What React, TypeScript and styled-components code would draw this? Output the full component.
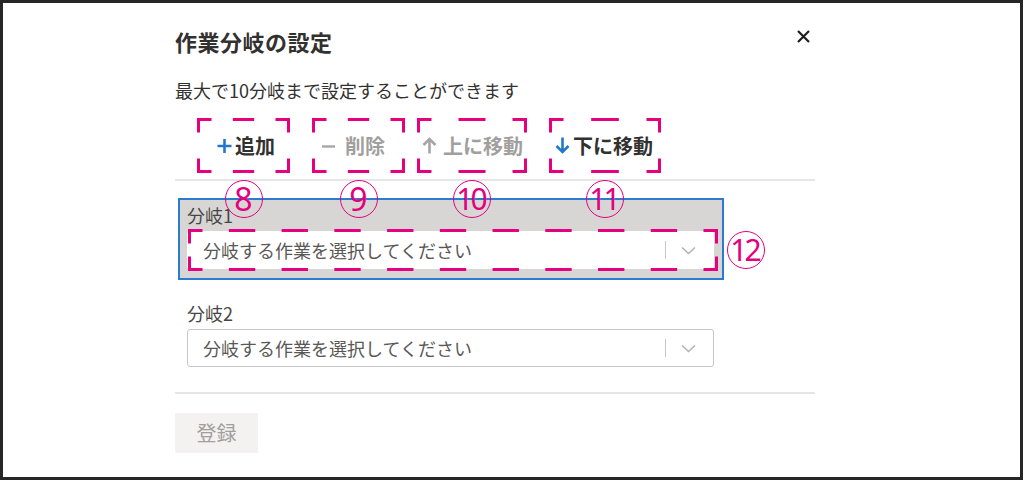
import React from "react";
import styled, { createGlobalStyle } from "styled-components";

const MAGENTA = "#e4007f";

const GlobalStyle = createGlobalStyle`
  html, body { margin: 0; padding: 0; background: #ffffff; }
  body { font-family: "Noto Sans CJK JP", "Noto Sans", sans-serif; }
  *, *::before, *::after { box-sizing: border-box; }
`;

const Frame = styled.div`
  width: 1023px;
  height: 480px;
  border: 3px solid #262626;
  background: #ffffff;
  overflow: hidden;
`;

const Dialog = styled.div`
  width: 640px;
  margin-left: 172px;
  padding-top: 23px;
  display: flex;
  flex-direction: column;
`;

const TitleRow = styled.div`
  display: flex;
  justify-content: space-between;
  align-items: flex-start;
`;

const Title = styled.h1`
  margin: 0;
  font-size: 22px;
  line-height: 30px;
  font-weight: 700;
  color: #323130;
  letter-spacing: 0.5px;
`;

const CloseButton = styled.button`
  border: 0;
  background: none;
  padding: 0;
  margin: 4px 5px 0 0;
  width: 13px;
  height: 13px;
  display: flex;
  cursor: pointer;
`;

const Subtitle = styled.p`
  margin: 21px 0 0;
  font-size: 18px;
  line-height: 26px;
  color: #323130;
`;

const CommandBar = styled.div`
  display: flex;
  margin-top: 15px;
  height: 55px;
`;

const CommandButton = styled.button<{ $w: number; $pl: number; $ml: number; $gap: number; $disabled?: boolean }>`
  position: relative;
  width: ${(p) => p.$w}px;
  height: 55px;
  margin-left: ${(p) => p.$ml}px;
  padding: 0 0 0 ${(p) => p.$pl}px;
  display: flex;
  align-items: center;
  gap: ${(p) => p.$gap}px;
  border: 0;
  background: none;
  font-family: inherit;
  font-size: 20px;
  line-height: 26px;
  font-weight: 700;
  color: ${(p) => (p.$disabled ? "#a19f9d" : "#323130")};
  cursor: ${(p) => (p.$disabled ? "default" : "pointer")};
  white-space: nowrap;
`;

const Separator = styled.hr<{ $mt: number }>`
  margin: ${(p) => p.$mt}px 0 0;
  border: 0;
  height: 2px;
  background: #e6e6e6;
`;

const BranchList = styled.div`
  margin-top: 17px;
  display: flex;
  flex-direction: column;
  gap: 16px;
`;

const BranchItem = styled.div<{ $selected?: boolean }>`
  width: 546px;
  margin-left: 3px;
  border: 2px solid ${(p) => (p.$selected ? "#2b7bd0" : "transparent")};
  background: ${(p) => (p.$selected ? "#d7d6d5" : "transparent")};
  padding: 3px 8px 9px 7px;
  display: flex;
  flex-direction: column;
  gap: 4px;
`;

const BranchLabel = styled.div`
  font-size: 18px;
  line-height: 24px;
  color: #484644;
`;

const Dropdown = styled.div<{ $bordered?: boolean }>`
  position: relative;
  height: 38px;
  display: flex;
  align-items: center;
  border: 1px solid ${(p) => (p.$bordered ? "#c8c6c4" : "#ffffff")};
  border-radius: 3px;
  background: #ffffff;
  padding: 0 17px 0 15px;
`;

const DropdownText = styled.span`
  flex: 1;
  font-size: 18px;
  line-height: 24px;
  color: #595856;
`;

const DropdownDivider = styled.span`
  width: 1.5px;
  height: 18px;
  background: #c8c8c8;
  margin-right: 15px;
`;

const Footer = styled.div`
  margin-top: 19px;
  display: flex;
`;

const PrimaryButton = styled.button`
  width: 83px;
  height: 40px;
  border: 0;
  border-radius: 1px;
  background: #f3f2f1;
  color: #a19f9d;
  font-family: inherit;
  font-size: 20px;
  line-height: 26px;
  padding: 0;
`;

/* ---------- annotation overlays ---------- */

const FrameSvg = styled.svg<{ $top: number; $left: number }>`
  position: absolute;
  top: ${(p) => p.$top}px;
  left: ${(p) => p.$left}px;
  pointer-events: none;
  overflow: visible;
  z-index: 2;
`;

const Badge = styled.span<{ $place: "below" | "right"; $double?: boolean }>`
  position: absolute;
  z-index: 3;
  width: 38px;
  height: 38px;
  border: 1.5px solid ${MAGENTA};
  border-radius: 50%;
  display: flex;
  align-items: center;
  justify-content: center;
  font-family: "Noto Sans", sans-serif;
  font-weight: 400;
  font-size: ${(p) => (p.$double ? 30 : 32)}px;
  letter-spacing: ${(p) => (p.$double ? "-3px" : "0")};
  text-indent: ${(p) => (p.$double ? "-3px" : "0")};
  line-height: 1;
  color: ${MAGENTA};
  pointer-events: none;
  ${(p) =>
    p.$place === "below"
      ? `top: calc(100% + 7px); left: 50%; transform: translateX(-50%);`
      : `left: calc(100% + 14px); top: 50%; transform: translateY(-50%);`}
`;

function buildDashPath(w: number, h: number): string {
  const i = 1.5;
  const a = 13;
  const x0 = i, y0 = i, x1 = w - i, y1 = h - i;
  let d = "";
  d += `M${x0} ${y0 + a}V${y0}H${x0 + a}`;
  d += `M${x1 - a} ${y0}H${x1}V${y0 + a}`;
  d += `M${x1} ${y1 - a}V${y1}H${x1 - a}`;
  d += `M${x0 + a} ${y1}H${x0}V${y1 - a}`;
  const side = (len: number) => {
    const m = len - 2 * a;
    const n = Math.floor(m / 52);
    if (n <= 0) return [] as [number, number][];
    const dl = m / (2 * n + 1);
    const out: [number, number][] = [];
    for (let k = 0; k < n; k++) {
      const s = a + dl * (2 * k + 1);
      out.push([s, s + dl]);
    }
    return out;
  };
  for (const [s, e] of side(x1 - x0)) {
    d += `M${x0 + s} ${y0}H${x0 + e}`;
    d += `M${x0 + s} ${y1}H${x0 + e}`;
  }
  for (const [s, e] of side(y1 - y0)) {
    d += `M${x0} ${y0 + s}V${y0 + e}`;
    d += `M${x1} ${y0 + s}V${y0 + e}`;
  }
  return d;
}

function DashFrame({ w, h, top = 0, left = 0 }: { w: number; h: number; top?: number; left?: number }) {
  return (
    <FrameSvg width={w} height={h} $top={top} $left={left} viewBox={`0 0 ${w} ${h}`}>
      <path d={buildDashPath(w, h)} fill="none" stroke={MAGENTA} strokeWidth={3} strokeLinecap="butt" strokeLinejoin="miter" />
    </FrameSvg>
  );
}

/* ---------- icons ---------- */

const CloseIcon = () => (
  <svg width="13" height="13" viewBox="0 0 13 13">
    <path d="M1 1L12 12M12 1L1 12" stroke="#1f1f1f" strokeWidth="2.2" fill="none" />
  </svg>
);

const PlusIcon = () => (
  <svg width="15" height="16" viewBox="0 0 15 16">
    <path d="M7.5 1V15M0.5 8H14.5" stroke="#2277cc" strokeWidth="2.6" fill="none" />
  </svg>
);

const MinusIcon = () => (
  <svg width="13" height="16" viewBox="0 0 13 16">
    <path d="M0 8.5H13" stroke="#a8a6a4" strokeWidth="2.4" fill="none" />
  </svg>
);

const ArrowIcon = ({ dir, color }: { dir: "up" | "down"; color: string }) => (
  <svg width="15" height="17" viewBox="0 0 15 17">
    {dir === "up" ? (
      <path d="M7.5 16.5V2M1.5 8L7.5 2L13.5 8" stroke={color} strokeWidth="2.6" fill="none" />
    ) : (
      <path d="M7.5 0.5V15M1.5 9L7.5 15L13.5 9" stroke={color} strokeWidth="2.6" fill="none" />
    )}
  </svg>
);

const Chevron = () => (
  <svg width="15" height="9" viewBox="0 0 15 9">
    <path d="M1 1.5L7.5 7.5L14 1.5" stroke="#b3b3b3" strokeWidth="1.6" fill="none" />
  </svg>
);

/* ---------- data ---------- */

type Cmd = {
  key: string;
  label: string;
  icon: React.ReactNode;
  disabled?: boolean;
  w: number;
  pl: number;
  ml: number;
  gap: number;
  badge: string;
};

const commands: Cmd[] = [
  { key: "add", label: "追加", icon: <PlusIcon />, w: 93, pl: 20, ml: 22, gap: 3, badge: "8" },
  { key: "del", label: "削除", icon: <MinusIcon />, disabled: true, w: 93, pl: 10, ml: 22, gap: 10, badge: "9" },
  { key: "up", label: "上に移動", icon: <ArrowIcon dir="up" color="#a8a6a4" />, disabled: true, w: 110, pl: 5, ml: 12, gap: 6, badge: "10" },
  { key: "down", label: "下に移動", icon: <ArrowIcon dir="down" color="#2277cc" />, w: 112, pl: 6, ml: 22, gap: 3, badge: "11" },
];

const placeholder = "分岐する作業を選択してください";

export default function App() {
  return (
    <>
      <GlobalStyle />
      <Frame>
        <Dialog>
          <TitleRow>
            <Title>作業分岐の設定</Title>
            <CloseButton aria-label="閉じる">
              <CloseIcon />
            </CloseButton>
          </TitleRow>
          <Subtitle>最大で10分岐まで設定することができます</Subtitle>

          <CommandBar>
            {commands.map((c) => (
              <CommandButton key={c.key} $w={c.w} $pl={c.pl} $ml={c.ml} $gap={c.gap} $disabled={c.disabled}>
                {c.icon}
                <span>{c.label}</span>
                <DashFrame w={c.w} h={55} />
                <Badge $place="below" $double={c.badge.length > 1}>{c.badge}</Badge>
              </CommandButton>
            ))}
          </CommandBar>

          <Separator $mt={6} />

          <BranchList>
            <BranchItem $selected>
              <BranchLabel>分岐1</BranchLabel>
              <Dropdown>
                <DropdownText>{placeholder}</DropdownText>
                <DropdownDivider />
                <Chevron />
                <DashFrame w={530} h={42} top={-3} left={0} />
                <Badge $place="right" $double>12</Badge>
              </Dropdown>
            </BranchItem>
            <BranchItem>
              <BranchLabel>分岐2</BranchLabel>
              <Dropdown $bordered>
                <DropdownText>{placeholder}</DropdownText>
                <DropdownDivider />
                <Chevron />
              </Dropdown>
            </BranchItem>
          </BranchList>

          <Separator $mt={14} />

          <Footer>
            <PrimaryButton disabled>登録</PrimaryButton>
          </Footer>
        </Dialog>
      </Frame>
    </>
  );
}
